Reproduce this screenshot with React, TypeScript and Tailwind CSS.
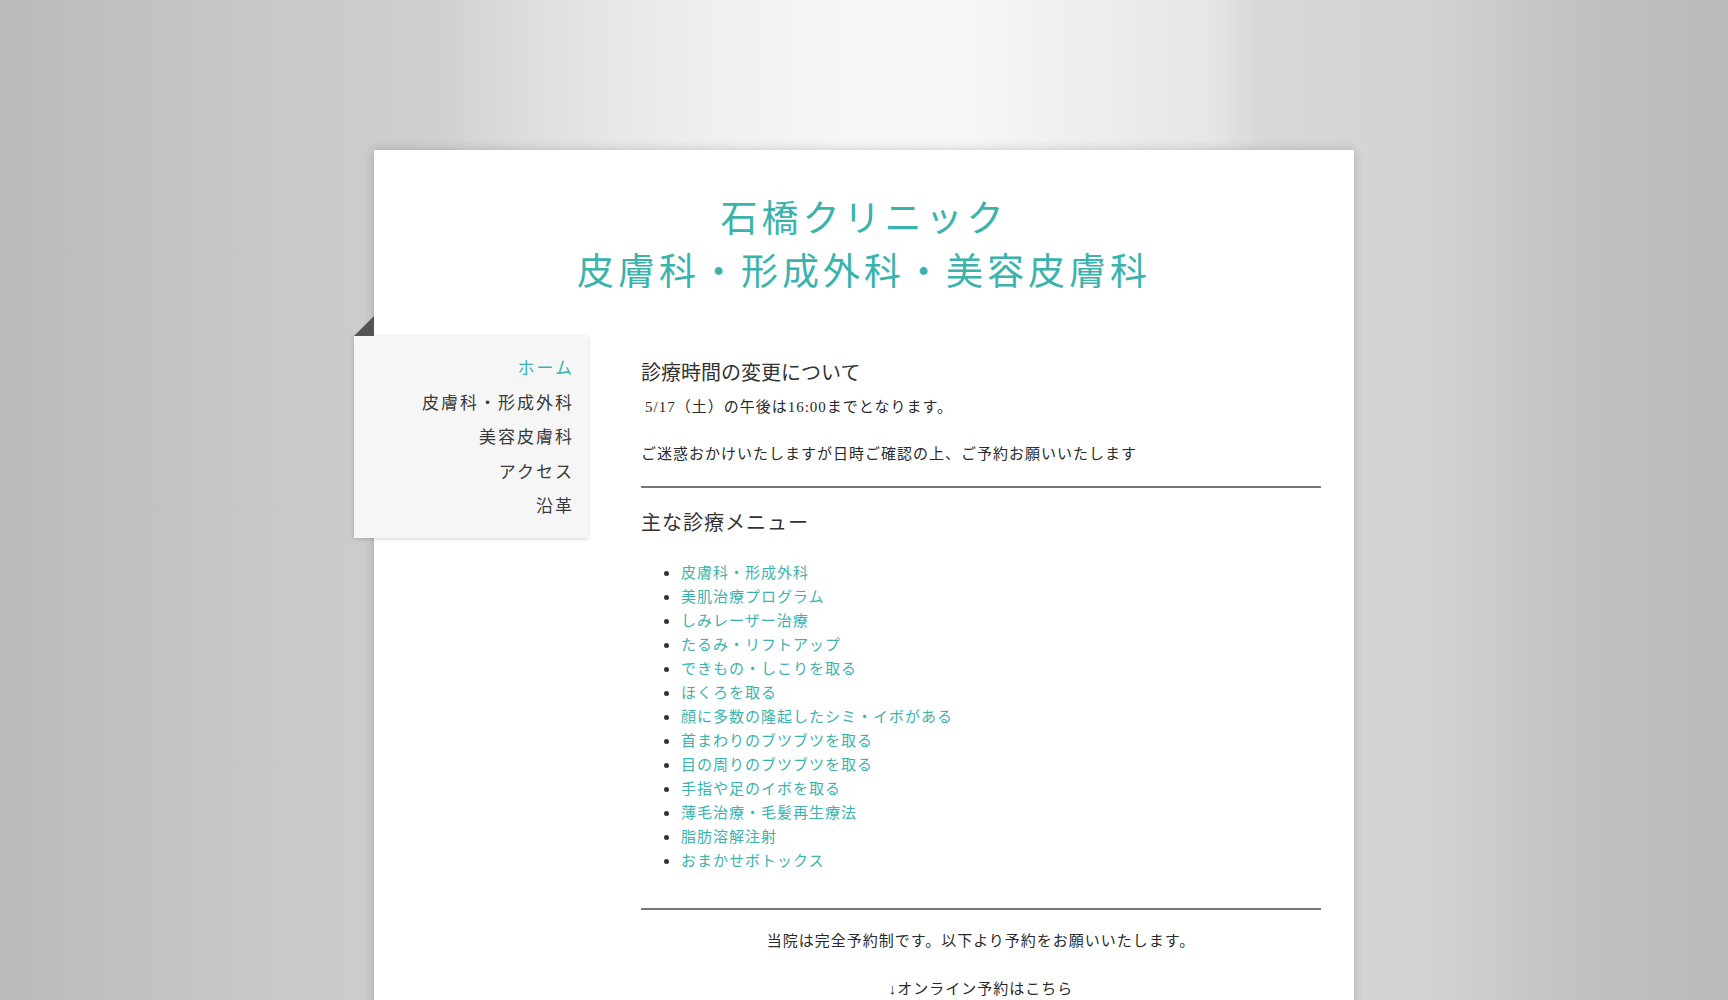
const NAV = [
  { label: "ホーム", active: true },
  { label: "皮膚科・形成外科" },
  { label: "美容皮膚科" },
  { label: "アクセス" },
  { label: "沿革" },
];

const MENU = [
  "皮膚科・形成外科",
  "美肌治療プログラム",
  "しみレーザー治療",
  "たるみ・リフトアップ",
  "できもの・しこりを取る",
  "ほくろを取る",
  "顔に多数の隆起したシミ・イボがある",
  "首まわりのブツブツを取る",
  "目の周りのブツブツを取る",
  "手指や足のイボを取る",
  "薄毛治療・毛髪再生療法",
  "脂肪溶解注射",
  "おまかせボトックス",
];

function SideNav() {
  return (
    <nav className="relative -ml-5 mt-10 w-[234px] shrink-0 self-start bg-[#f6f6f6] pb-[13px] pt-4 pr-[14px] text-right shadow-[0_1px_4px_rgba(0,0,0,0.18)]">
      {/* folded corner */}
      <svg
        className="absolute -top-5 left-0"
        width="20"
        height="20"
        viewBox="0 0 20 20"
        aria-hidden
      >
        <polygon points="20,0 20,20 0,20" fill="#555555" />
      </svg>
      <ul className="font-['Liberation_Serif','Noto_Sans_CJK_JP',serif] text-[17px] leading-[34.5px] tracking-[2px]">
        {NAV.map((item) => (
          <li key={item.label}>
            <a
              href="#"
              className={item.active ? "text-[#3bb3ad]" : "text-[#3a3a3a]"}
            >
              {item.label}
            </a>
          </li>
        ))}
      </ul>
    </nav>
  );
}

export default function App() {
  return (
    <div className="min-h-screen bg-[linear-gradient(to_right,#bababa_0%,#c6c6c6_13%,#cfcfcf_25%,#dcdcdc_30%,#e8e8e8_36%,#f0f0f0_42%,#f5f5f5_48%,#f7f7f7_55%,#f0f0f0_61%,#e6e6e6_70%,#d8d8d8_73%,#d2d2d2_83%,#c0c0c0_92%,#bababa_100%)] pt-[150px]">
      <div className="mx-auto w-[980px] bg-white pb-16 pt-10 shadow-[0_0_10px_rgba(0,0,0,0.18)]">
        <header className="text-center font-['Noto_Sans_CJK_JP',sans-serif] text-[37px] font-normal leading-[53px] tracking-[4px] text-[#3bb3ad]">
          <h1>
            石橋クリニック
            <br />
            皮膚科・形成外科・美容皮膚科
          </h1>
        </header>

        <div className="flex gap-[53px] pr-[33px]">
          <SideNav />

          <main className="mt-10 flex-1 pt-[22px] font-['Liberation_Serif','Noto_Sans_CJK_JP',serif] text-[15px] leading-6 text-[#2a2a2a]">
            <h2 className="font-['Noto_Sans_CJK_JP',sans-serif] text-[20px] leading-7 text-[#333]">
              診療時間の変更について
            </h2>
            <p className="mt-[9px] pl-1 tracking-[1px]">
              5/17（土）の午後は16:00までとなります。
            </p>
            <p className="mt-[23px] tracking-[1px]">
              ご迷惑おかけいたしますが日時ご確認の上、ご予約お願いいたします
            </p>

            <hr className="mt-5 border-0 border-t-2 border-[#777]" />

            <h2 className="mt-5 font-['Noto_Sans_CJK_JP',sans-serif] text-[20px] leading-7 tracking-[1px] text-[#333]">
              主な診療メニュー
            </h2>
            <ul className="mt-6 list-disc pl-10 tracking-[1px] text-[#333] marker:text-[18px]">
              {MENU.map((m) => (
                <li key={m} className="h-6">
                  <a href="#" className="text-[#3bb3ad]">
                    {m}
                  </a>
                </li>
              ))}
            </ul>

            <hr className="mt-9 border-0 border-t-2 border-[#777]" />

            <div className="text-center tracking-[1px]">
              <p className="mt-[19px]">
                当院は完全予約制です。以下より予約をお願いいたします。
              </p>
              <p className="mt-6">↓オンライン予約はこちら</p>
            </div>
          </main>
        </div>
      </div>
    </div>
  );
}
